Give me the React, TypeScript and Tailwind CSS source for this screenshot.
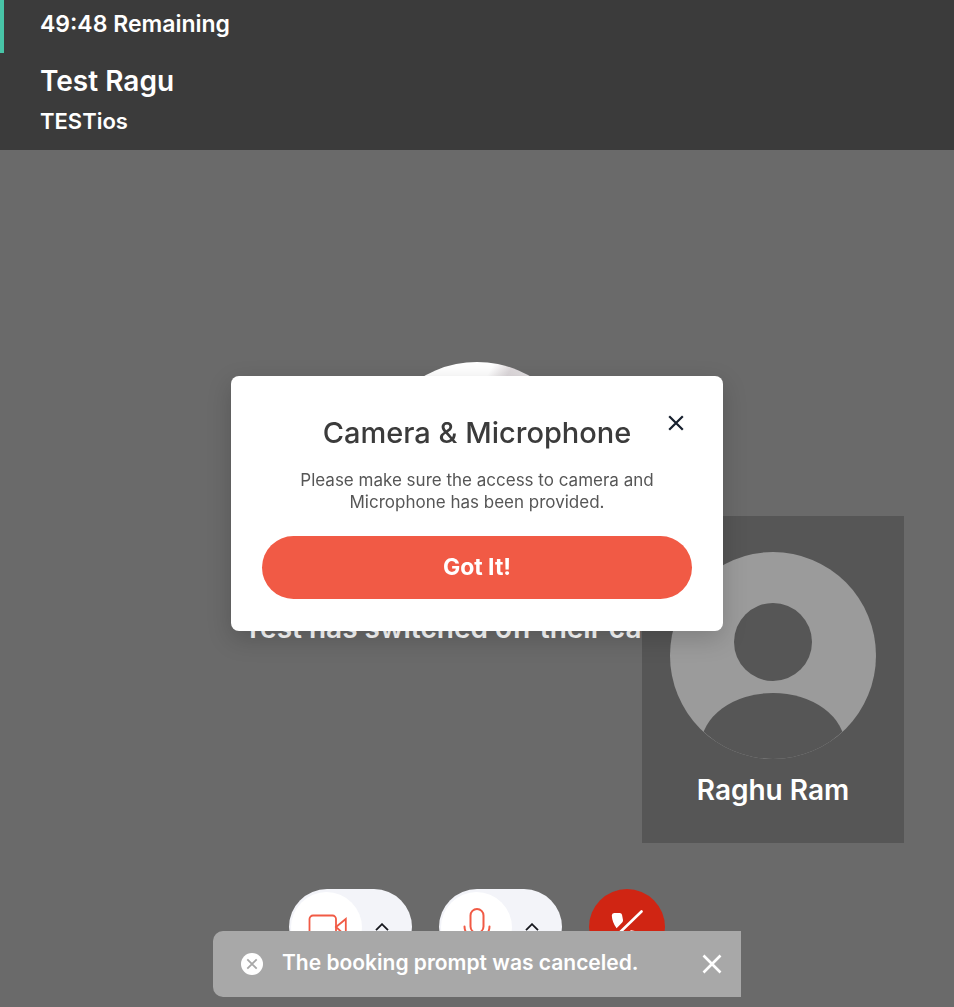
import { useState } from "react";

function CloseGlyph({ className, width }: { className: string; width: number }) {
  return (
    <svg viewBox="0 0 20 20" className={className} fill="none" stroke="currentColor" strokeWidth={width} aria-hidden="true">
      <path d="M1.5 1.5 18.5 18.5M18.5 1.5 1.5 18.5" />
    </svg>
  );
}

function CallHeader() {
  return (
    <header className="bg-[#3b3b3b] pb-[9px] text-white">
      <div className="flex h-[53px] border-l-4 border-[#48c4a7] pt-2 pl-9">
        <p className="text-[23px] leading-8 font-semibold">49:48 Remaining</p>
      </div>
      <div className="px-10 pt-2">
        <h1 className="text-[28px] leading-10 font-semibold">Test Ragu</h1>
        <p className="text-[22px] leading-10 font-semibold">TESTios</p>
      </div>
    </header>
  );
}

function CameraIcon() {
  return (
    <svg viewBox="0 0 40 28" className="h-7 w-10" fill="none" stroke="#f15a45" strokeWidth="1.8" aria-hidden="true">
      <rect x="2.5" y="2.5" width="26.5" height="24" rx="3.5" />
      <path d="M29 14 38.8 6v17z" />
    </svg>
  );
}

function MicIcon() {
  return (
    <svg viewBox="0 0 28 38" className="h-[38px] w-7" fill="none" stroke="#f15a45" strokeWidth="2" strokeLinecap="round" aria-hidden="true">
      <rect x="7.5" y="1" width="13" height="24" rx="6.5" />
      <path d="M1.5 18.5c0 15 25 15 25 0M14 30v7M8 37h12" />
    </svg>
  );
}

function ChevronUp() {
  return (
    <svg viewBox="0 0 14 8" className="h-2 w-[14px]" fill="none" stroke="#17191f" strokeWidth="1.8" aria-hidden="true">
      <path d="m1 7.2 6-6 6 6" />
    </svg>
  );
}

function DevicePill({ label, children }: { label: string; children: React.ReactNode }) {
  return (
    <div className="flex h-19 w-[123px] items-center rounded-full bg-[#f3f4f9] pl-[2px]">
      <button type="button" aria-label={`Toggle ${label}`} className="flex size-[71px] items-center justify-center rounded-full bg-white">
        {children}
      </button>
      <button type="button" aria-label={`${label} options`} className="flex h-full flex-1 items-center justify-center pr-[10px]">
        <ChevronUp />
      </button>
    </div>
  );
}

function Controls() {
  return (
    <div className="flex justify-center gap-[27px]">
      <DevicePill label="Camera">
        <CameraIcon />
      </DevicePill>
      <DevicePill label="Microphone">
        <MicIcon />
      </DevicePill>
      <button type="button" aria-label="End call" className="flex size-19 items-center justify-center rounded-full bg-[#d02513]">
        <svg viewBox="0 0 34 34" className="size-[34px]" aria-hidden="true">
          <path
            fill="#fff"
            d="M1.8 5.5Q1.8 3 4.2 3H9.8q1.8 0 2.2 1.8l1 5.2q.3 1.4-.8 2.6L6.6 18.3Q2.2 12.5 1.8 5.5ZM19.5 21.3q1.3-1.3 3-.9l6 1.3q2 .4 2 2.3v5.2q0 1.8-1.8 1.8-8.2 0-14.7-4.2z"
          />
          <path d="M31.5 1.5 2 30" stroke="#fff" strokeWidth="2.6" strokeLinecap="round" />
        </svg>
      </button>
    </div>
  );
}

function SelfView() {
  return (
    <aside className="absolute right-[50px] bottom-[164px] flex w-[262px] flex-col items-center bg-[#565656] pt-9 pb-[33px]">
      <svg viewBox="0 0 206 207" className="h-[207px] w-[206px]" aria-hidden="true">
        <defs>
          <clipPath id="portrait">
            <ellipse cx="103" cy="103.5" rx="102.9" ry="103.4" />
          </clipPath>
        </defs>
        <ellipse cx="103" cy="103.5" rx="103" ry="103.5" fill="#9b9b9b" />
        <g clipPath="url(#portrait)" fill="#565656">
          <circle cx="103" cy="90" r="39" />
          <ellipse cx="103" cy="194" rx="72" ry="53" />
        </g>
      </svg>
      <p className="pt-[11px] text-[28px] leading-10 font-semibold text-white">Raghu Ram</p>
    </aside>
  );
}

function PermissionDialog({ onClose }: { onClose: () => void }) {
  return (
    <div className="fixed inset-0 flex items-center justify-center px-4">
      <section
        role="dialog"
        aria-labelledby="dialog-title"
        className="relative w-[492px] max-w-full rounded-lg bg-white px-[31px] pt-[37px] pb-8 text-center shadow-[0_8px_24px_rgba(0,0,0,0.18)]"
      >
        <button type="button" aria-label="Close dialog" onClick={onClose} className="absolute top-[39px] right-[39px] text-[#17202e]">
          <CloseGlyph className="size-4" width={2.8} />
        </button>
        <h2 id="dialog-title" className="text-[29px] leading-10 font-medium text-[#3b3b3b]">
          Camera &amp; Microphone
        </h2>
        <p className="mx-auto max-w-[370px] pt-4 pb-[23px] text-[17px] leading-[22px] text-[#565656]">
          Please make sure the access to camera and Microphone has been provided.
        </p>
        <button type="button" onClick={onClose} className="h-[63px] w-full rounded-full bg-[#f15a45] pb-[2px] text-[23px] leading-8 font-bold text-white">
          Got It!
        </button>
      </section>
    </div>
  );
}

function Toast({ onClose }: { onClose: () => void }) {
  return (
    <div className="fixed inset-x-0 bottom-[10px] flex justify-center">
      <div role="status" className="flex h-[66px] w-[528px] max-w-full items-center rounded-l-[10px] bg-[#a8a8a8] pr-[19px] pl-7 text-white">
        <svg viewBox="0 0 22 22" className="size-[22px]" aria-hidden="true">
          <circle cx="11" cy="11" r="11" fill="#fff" />
          <path d="m6.3 6.3 9.4 9.4m0-9.4-9.4 9.4" stroke="#a8a8a8" strokeWidth="1.8" />
        </svg>
        <p className="flex-1 pb-[2px] pl-[19px] text-[21px] leading-8 font-semibold">The booking prompt was canceled.</p>
        <button type="button" aria-label="Dismiss message" onClick={onClose}>
          <CloseGlyph className="size-5" width={2.6} />
        </button>
      </div>
    </div>
  );
}

export default function App() {
  const [dialogOpen, setDialogOpen] = useState(true);
  const [toastOpen, setToastOpen] = useState(true);

  return (
    <div className="relative flex min-h-screen flex-col bg-[#6a6a6a] font-['Inter','Liberation_Sans',sans-serif]">
      <CallHeader />
      <main className="flex flex-1 flex-col justify-between pt-[212px] pb-[42px]">
        <div className="flex flex-col items-center">
          <div className="size-[214px] rounded-full bg-[linear-gradient(120deg,#fff_0%,#fff_37%,#ddd8db_43%,#eee_60%)]" />
          <p className="pt-8 text-[28px] leading-10 font-semibold whitespace-nowrap text-white">Test has switched off their camera</p>
        </div>
        <Controls />
      </main>
      <SelfView />
      {dialogOpen && <PermissionDialog onClose={() => setDialogOpen(false)} />}
      {toastOpen && <Toast onClose={() => setToastOpen(false)} />}
    </div>
  );
}
